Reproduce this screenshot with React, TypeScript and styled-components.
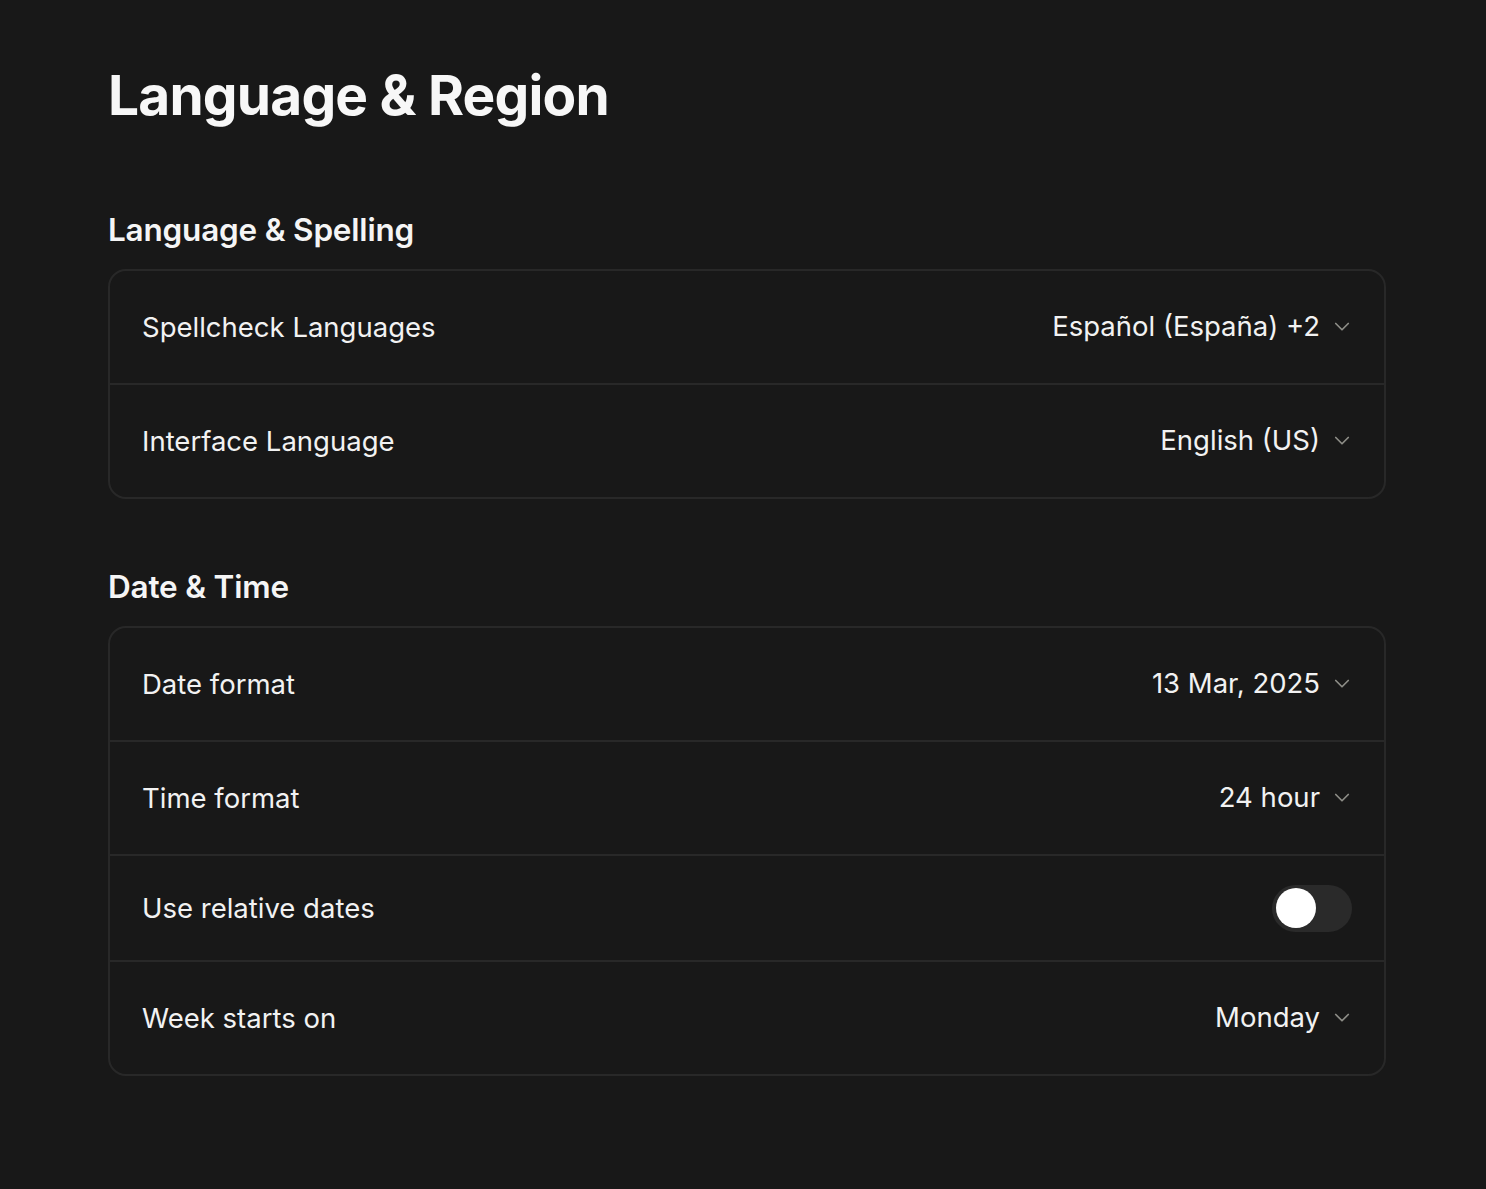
import styled, { createGlobalStyle } from "styled-components";

const GlobalStyle = createGlobalStyle`
  html, body {
    margin: 0;
    padding: 0;
    background: #181818;
  }
  body {
    font-family: Inter, "Noto Sans", sans-serif;
    color: #f5f5f5;
    -webkit-font-smoothing: antialiased;
  }
`;

type SelectRow = { label: string; value: string };

const languageRows: SelectRow[] = [
  { label: "Spellcheck Languages", value: "Español (España) +2" },
  { label: "Interface Language", value: "English (US)" },
];

function Chevron() {
  return (
    <ChevronIcon viewBox="0 0 16 16" fill="none">
      <path d="M3 6l5 5 5-5" stroke="currentColor" strokeWidth="1.4" strokeLinecap="round" strokeLinejoin="round" />
    </ChevronIcon>
  );
}

function Select({ value }: { value: string }) {
  return (
    <SelectButton>
      <span>{value}</span>
      <Chevron />
    </SelectButton>
  );
}

export default function App() {
  return (
    <>
      <GlobalStyle />
      <Page>
        <Title>Language &amp; Region</Title>

        <Section>
          <SectionTitle>Language &amp; Spelling</SectionTitle>
          <Card>
            {languageRows.map((row) => (
              <Row key={row.label}>
                <Label>{row.label}</Label>
                <Select value={row.value} />
              </Row>
            ))}
          </Card>
        </Section>

        <Section>
          <SectionTitle>Date &amp; Time</SectionTitle>
          <Card>
            <Row>
              <Label>Date format</Label>
              <Select value="13 Mar, 2025" />
            </Row>
            <Row>
              <Label>Time format</Label>
              <Select value="24 hour" />
            </Row>
            <Row $compact>
              <Label>Use relative dates</Label>
              <Switch role="switch" aria-checked="false">
                <Knob />
              </Switch>
            </Row>
            <Row>
              <Label>Week starts on</Label>
              <Select value="Monday" />
            </Row>
          </Card>
        </Section>
      </Page>
    </>
  );
}

const Page = styled.main`
  padding: 59px 100px 40px 108px;
  display: flex;
  flex-direction: column;
`;

const Title = styled.h1`
  margin: 0 0 80px;
  font-size: 55px;
  line-height: 72px;
  font-weight: 700;
  letter-spacing: -0.8px;
  color: #f7f7f7;
`;

const Section = styled.section`
  display: flex;
  flex-direction: column;
  gap: 20px;
  margin-bottom: 69px;
`;

const SectionTitle = styled.h2`
  margin: 0;
  font-size: 31.5px;
  line-height: 38px;
  font-weight: 600;
  letter-spacing: -0.2px;
  color: #f5f5f5;
`;

const Card = styled.div`
  border: 2px solid #282828;
  border-radius: 18px;
  overflow: hidden;
`;

const Row = styled.div<{ $compact?: boolean }>`
  height: ${(p) => (p.$compact ? 104 : 112)}px;
  padding: 0 32px 0 32px;
  display: flex;
  align-items: center;
  justify-content: space-between;
  & + & {
    border-top: 2px solid #282828;
  }
`;

const Label = styled.span`
  font-size: 27.5px;
  font-weight: 400;
  color: #f2f2f2;
`;

const SelectButton = styled.button`
  display: flex;
  align-items: center;
  gap: 12px;
  padding: 0;
  margin-top: -3px;
  background: none;
  border: none;
  font-family: inherit;
  font-size: 27.5px;
  color: #f2f2f2;
  cursor: pointer;
`;

const ChevronIcon = styled.svg`
  width: 20px;
  height: 20px;
  color: #8c8c86;
`;

const Switch = styled.div`
  width: 80px;
  height: 47px;
  border-radius: 24px;
  background: #2a2a2a;
  display: flex;
  align-items: center;
  padding: 0 4px;
  box-sizing: border-box;
`;

const Knob = styled.span`
  width: 40px;
  height: 40px;
  border-radius: 50%;
  background: #ffffff;
`;
